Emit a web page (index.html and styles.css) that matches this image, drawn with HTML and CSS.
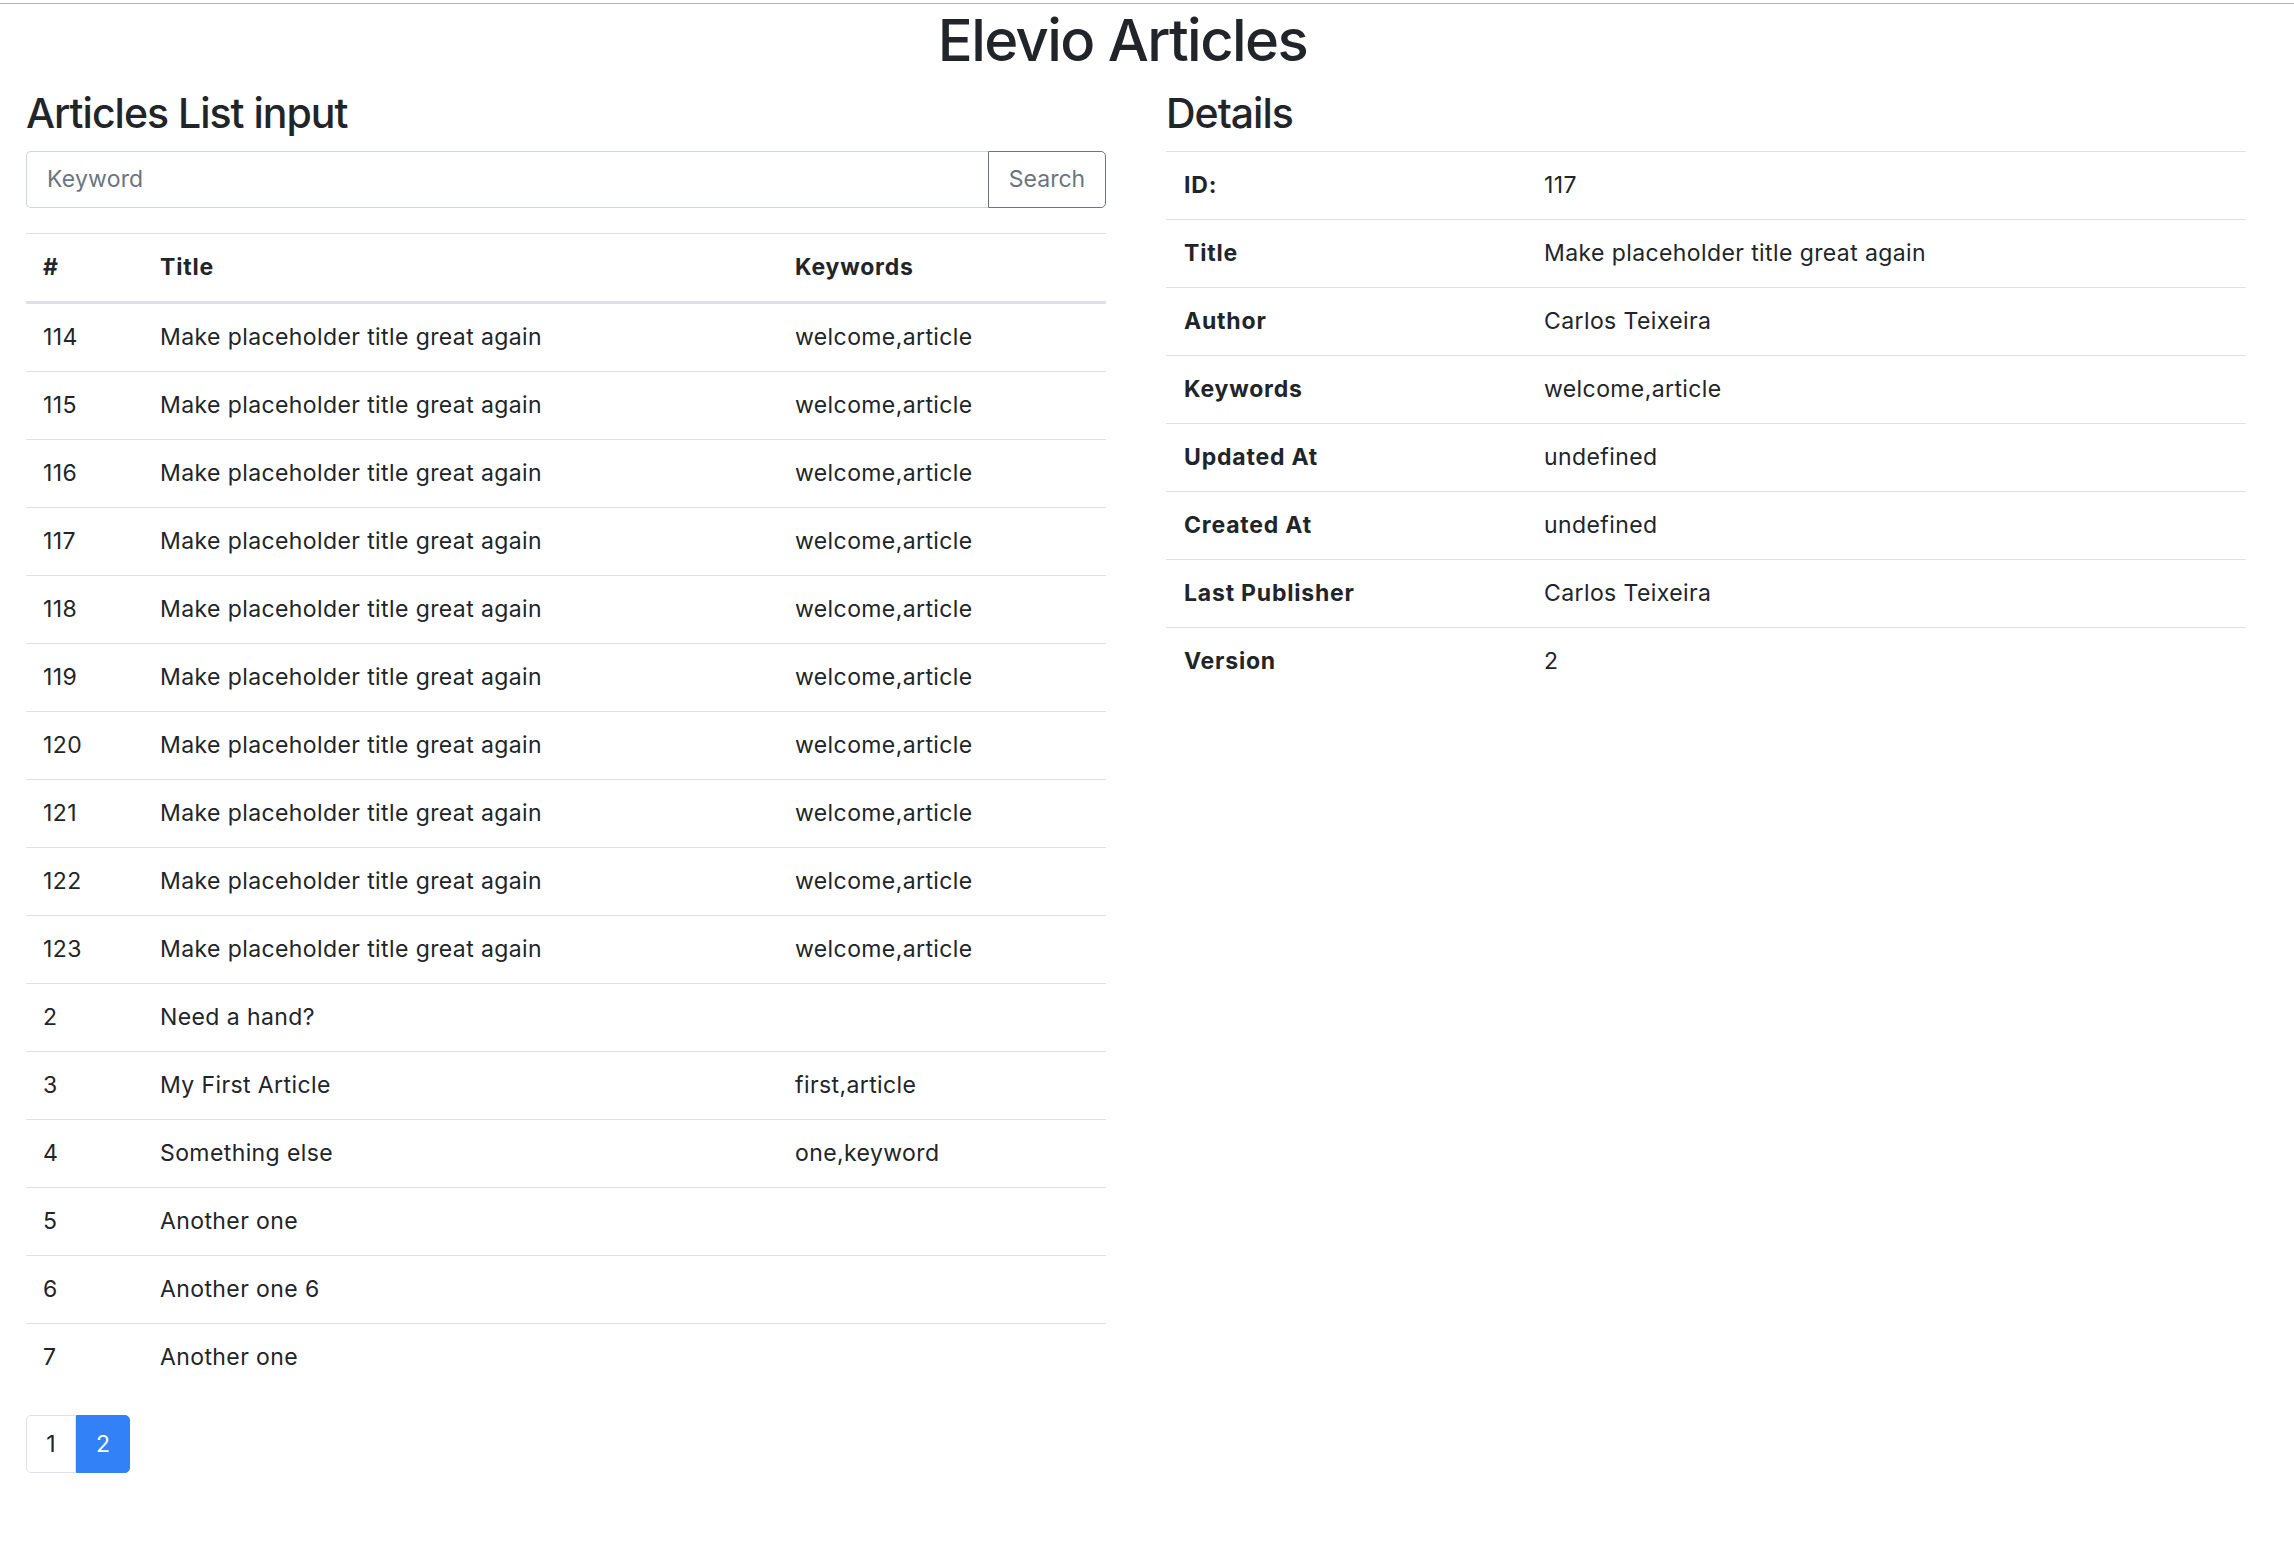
FILE: index.html
```html
<!DOCTYPE html>
<html lang="en">
<head>
<meta charset="utf-8">
<title>Elevio Articles</title>
<link rel="stylesheet" href="styles.css">
</head>
<body>
<div class="topline"></div>
<h1 class="page-title">Elevio Articles</h1>
<div class="layout">
  <section class="col">
    <h2 class="section-title">Articles List input</h2>
    <div class="input-group">
      <input class="search-input" type="text" placeholder="Keyword">
      <button class="search-btn" type="button">Search</button>
    </div>
    <table class="list-table">
      <colgroup><col class="c-id"><col class="c-title"><col class="c-kw"></colgroup>
      <thead>
        <tr><th>#</th><th>Title</th><th>Keywords</th></tr>
      </thead>
      <tbody>
        <tr><td>114</td><td>Make placeholder title great again</td><td>welcome,article</td></tr>
        <tr><td>115</td><td>Make placeholder title great again</td><td>welcome,article</td></tr>
        <tr><td>116</td><td>Make placeholder title great again</td><td>welcome,article</td></tr>
        <tr><td>117</td><td>Make placeholder title great again</td><td>welcome,article</td></tr>
        <tr><td>118</td><td>Make placeholder title great again</td><td>welcome,article</td></tr>
        <tr><td>119</td><td>Make placeholder title great again</td><td>welcome,article</td></tr>
        <tr><td>120</td><td>Make placeholder title great again</td><td>welcome,article</td></tr>
        <tr><td>121</td><td>Make placeholder title great again</td><td>welcome,article</td></tr>
        <tr><td>122</td><td>Make placeholder title great again</td><td>welcome,article</td></tr>
        <tr><td>123</td><td>Make placeholder title great again</td><td>welcome,article</td></tr>
        <tr><td>2</td><td>Need a hand?</td><td></td></tr>
        <tr><td>3</td><td>My First Article</td><td>first,article</td></tr>
        <tr><td>4</td><td>Something else</td><td>one,keyword</td></tr>
        <tr><td>5</td><td>Another one</td><td></td></tr>
        <tr><td>6</td><td>Another one 6</td><td></td></tr>
        <tr><td>7</td><td>Another one</td><td></td></tr>
      </tbody>
    </table>
    <nav class="pagination">
      <a class="page-link">1</a>
      <a class="page-link active">2</a>
    </nav>
  </section>
  <section class="col">
    <h2 class="section-title">Details</h2>
    <table class="details-table">
      <colgroup><col class="c-label"><col></colgroup>
      <tbody>
        <tr><th>ID:</th><td>117</td></tr>
        <tr><th>Title</th><td>Make placeholder title great again</td></tr>
        <tr><th>Author</th><td>Carlos Teixeira</td></tr>
        <tr><th>Keywords</th><td>welcome,article</td></tr>
        <tr><th>Updated At</th><td>undefined</td></tr>
        <tr><th>Created At</th><td>undefined</td></tr>
        <tr><th>Last Publisher</th><td>Carlos Teixeira</td></tr>
        <tr><th>Version</th><td>2</td></tr>
      </tbody>
    </table>
  </section>
</div>
</body>
</html>
```

FILE: styles.css
```css
html, body {
  margin: 0;
  padding: 0;
  background: #fff;
}
body {
  font-family: "Inter", "Roboto", "Liberation Sans", sans-serif;
  font-size: 23px;
  line-height: 33px;
  letter-spacing: 0.4px;
  color: #212529;
}
.topline {
  height: 1px;
  margin-top: 3px;
  background: #b4b4b4;
}
.page-title {
  margin: 2px 49px 0 0;
  font-size: 58px;
  line-height: 1.2;
  font-weight: 500;
  letter-spacing: -1.6px;
  text-align: center;
}
.layout {
  display: grid;
  grid-template-columns: 1080px 1080px;
  column-gap: 60px;
  padding-left: 26px;
}
.section-title {
  margin: 13px 0 13px;
  font-size: 41px;
  line-height: 1.2;
  font-weight: 500;
  letter-spacing: -1px;
}
.input-group {
  display: flex;
  height: 57px;
}
.search-input {
  flex: 1;
  min-width: 0;
  box-sizing: border-box;
  height: 57px;
  margin: 0;
  padding: 0 20px;
  border: 1px solid #ced4da;
  border-right: 0;
  border-radius: 5px 0 0 5px;
  font: inherit;
  letter-spacing: 0.2px;
  color: #495057;
  outline: none;
}
.search-input::placeholder {
  color: #6c757d;
}
.search-btn {
  box-sizing: border-box;
  width: 118px;
  height: 57px;
  margin: 0;
  padding: 0;
  border: 1px solid #6c757d;
  border-radius: 0 5px 5px 0;
  background: #fff;
  color: #6c757d;
  font: inherit;
  letter-spacing: 0;
}
table {
  width: 100%;
  border-collapse: collapse;
  table-layout: fixed;
}
th, td {
  padding: 17px 17px;
  text-align: left;
  vertical-align: top;
  border-top: 1px solid #dee2e6;
}
th {
  font-weight: 700;
  letter-spacing: 0.8px;
}
.list-table {
  margin-top: 25px;
}
.list-table thead th {
  border-bottom: 3px solid #dee2e6;
}
.c-id { width: 117px; }
.c-title { width: 635px; }
.c-label { width: 360px; }
.details-table th, .details-table td {
  padding-left: 18px;
}
.pagination {
  display: flex;
  margin-top: 24px;
}
.page-link {
  box-sizing: border-box;
  height: 58px;
  padding: 12px 0;
  text-align: center;
  border: 1px solid #dee2e6;
  color: #212529;
  text-decoration: none;
  letter-spacing: 0;
}
.page-link:first-child {
  width: 50px;
  border-radius: 5px 0 0 5px;
}
.page-link.active {
  width: 54px;
  background: #3381f7;
  border-color: #3381f7;
  color: #fff;
  border-radius: 0 5px 5px 0;
}
```
